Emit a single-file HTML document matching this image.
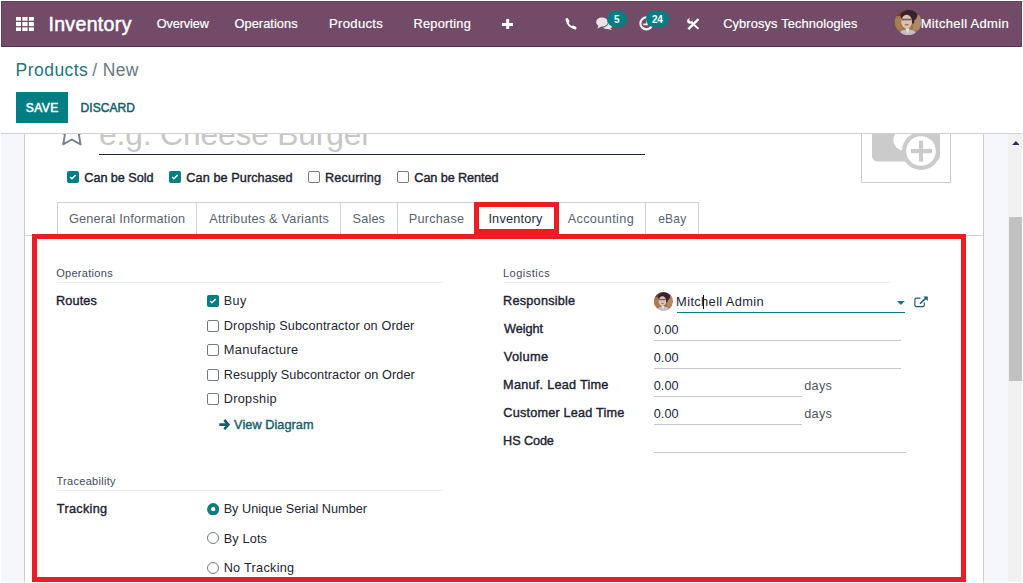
<!DOCTYPE html>
<html>
<head>
<meta charset="utf-8">
<title>Odoo - Products</title>
<style>
*{box-sizing:border-box;margin:0;padding:0}
html,body{width:1023px;height:583px;overflow:hidden;background:#fff;font-family:"Liberation Sans",sans-serif;color:#212529}
.a{position:absolute;white-space:nowrap;line-height:1}
.cb{width:12px;height:12px;border:1px solid #737b88;border-radius:2px;background:#fff}
.rd{width:12px;height:12px;border:1px solid #737b88;border-radius:50%;background:#fff}
.hr{height:1px;background:#eceef1}
.inp{height:1px;background:#c4c7cc}
.ts{top:203px;width:1px;height:32px;background:#cdd1d8}
.badge{background:#017e84;border-radius:8.2px;height:16.4px;top:10.7px}
</style>
</head>
<body>
<!-- NAVBAR -->
<div class="a" style="left:1px;top:1px;width:1021px;height:45px;background:#714b67"></div>
<div class="a" style="left:1px;top:46px;width:1021px;height:1px;background:#552f4d"></div>
<div class="a" style="left:1px;top:1px;width:1px;height:46px;background:#64405b"></div>
<div class="a" style="left:1021px;top:1px;width:1px;height:46px;background:#64405b"></div>
<div class="a" style="left:1px;top:1px;width:1021px;height:1px;background:#64405b"></div>
<!-- apps grid -->
<svg class="a" style="left:15.6px;top:16.9px" width="18" height="14.2" viewBox="0 0 18 14.2"><g fill="#fff"><rect x="0" y="0" width="5" height="3.7"/><rect x="6.3" y="0" width="5.3" height="3.7"/><rect x="12.9" y="0" width="5" height="3.7"/><rect x="0" y="5" width="5" height="4.1"/><rect x="6.3" y="5" width="5.3" height="4.1"/><rect x="12.9" y="5" width="5" height="4.1"/><rect x="0" y="10.4" width="5" height="3.7"/><rect x="6.3" y="10.4" width="5.3" height="3.7"/><rect x="12.9" y="10.4" width="5" height="3.7"/></g></svg>
<!-- plus -->
<svg class="a" style="left:501.8px;top:18.6px" width="11.4" height="10.8" viewBox="0 0 11.4 10.8"><path d="M4.2 0h3v3.9h4.2v3h-4.2v3.9h-3v-3.9h-4.2v-3h4.2z" fill="#fff"/></svg>
<!-- phone -->
<svg class="a" style="left:564.6px;top:18px" width="12" height="11.6" viewBox="0 0 12 11.6"><g fill="none" stroke="#fff" stroke-linecap="round"><path d="M2.1 2.4 C1.9 6 5.6 9.7 9.2 9.5" stroke-width="2"/><path d="M2 1.6 L2.9 3.4" stroke-width="3"/><path d="M8.2 9.1 L10 10" stroke-width="3"/></g></svg>
<!-- comments -->
<svg class="a" style="left:596px;top:16.8px" width="17" height="13.4" viewBox="0 0 17 13.4"><g fill="#ebe4e9"><path d="M11.2 12.1 C13.9 12.1 16.3 10.6 16.3 8.4 C16.3 6.6 14.6 5.2 12.6 4.9 L7 10.4 C8 11.5 9.5 12.1 11.2 12.1Z"/><path d="M13.6 11 L16.3 13.2 L11.8 12Z"/></g><ellipse cx="6" cy="5.1" rx="6.7" ry="5.4" fill="#714b67"/><g fill="#ebe4e9"><ellipse cx="6" cy="5" rx="5.9" ry="4.6"/><path d="M2.6 8 L1.4 11.4 L6 9.3Z"/></g></svg>
<div class="a badge" style="left:607.1px;width:20px"></div>
<!-- clock -->
<svg class="a" style="left:638.6px;top:16.2px" width="15" height="15" viewBox="0 0 15 15"><circle cx="7.4" cy="7.4" r="6" fill="none" stroke="#f4eff3" stroke-width="2.2"/><path d="M4.3 8.4 H8 V3.6" fill="none" stroke="#f4eff3" stroke-width="1.6"/></svg>
<div class="a badge" style="left:646px;width:23px"></div>
<!-- tools -->
<svg class="a" style="left:686.6px;top:17.8px" width="12.6" height="12.2" viewBox="0 0 12.6 12.2"><circle cx="2.9" cy="3" r="2.7" fill="#fff"/><path d="M3.4 3.4 L11.4 10.8" stroke="#fff" stroke-width="1.9" fill="none"/><circle cx="4" cy="1.7" r="1.75" fill="#714b67"/><path d="M11.5 1.1 L1.3 11.1" stroke="#fff" stroke-width="2.4" fill="none"/></svg>
<!-- avatar -->
<svg class="a" style="left:894.7px;top:8.7px" width="26.2" height="26.2" viewBox="0 0 26 26"><defs><clipPath id="av1"><circle cx="13" cy="13" r="13"/></clipPath></defs><g clip-path="url(#av1)"><rect width="26" height="26" fill="#a0744e"/><rect x="0" y="0" width="26" height="7" fill="#6e4338"/><rect x="18" y="6" width="8" height="15" fill="#b08a62"/><rect x="0" y="9" width="7" height="11" fill="#a97c52"/><ellipse cx="13.8" cy="6.8" rx="8.4" ry="5.8" fill="#3a2230"/><rect x="16.4" y="5" width="2.6" height="9.5" rx="1.2" fill="#3a2230"/><ellipse cx="11.6" cy="12.6" rx="5.3" ry="6.8" fill="#dcc4b4"/><rect x="6.8" y="9.6" width="9.6" height="1.7" fill="#6a4a44" opacity=".85"/><ellipse cx="11.6" cy="15.6" rx="2.2" ry="0.9" fill="#b0705f"/><path d="M4 26 C5 21 9 19.5 12.5 21.2 C16 19.5 20.5 21 22 26Z" fill="#c6bcc6"/><path d="M10.4 19 L12.5 24.5 L14.6 19.4Z" fill="#e9e2e6"/></g></svg>

<!-- CONTROL PANEL -->
<div class="a" style="left:16px;top:92px;width:52px;height:31px;background:#017e84"></div>
<div class="a" style="left:1px;top:133px;width:1021px;height:1px;background:#cfd3d9"></div>

<!-- CONTENT BG + SHEET -->
<div class="a" style="left:1px;top:134px;width:1007px;height:448px;background:#f5f7fa"></div>
<div class="a" style="left:24px;top:134px;width:960px;height:448px;background:#fff;border-left:1px solid #c9ccd6;border-right:1px solid #c9ccd6"></div>

<!-- TITLE ROW (clipped) -->
<div class="a" style="left:25px;top:134px;width:958px;height:30px;overflow:hidden">
<div class="a" style="left:74.12px;top:-15.50px;font-size:31.78px;color:#c6c6c6;letter-spacing:-0.161px">e.g. Cheese Burger</div>
<svg class="a" style="left:30px;top:-20px" width="34" height="34" viewBox="55 114 34 34"><path d="M71.7 115.5 L66.8 126.3 L55.8 127.5 L64.9 134.6 L63.2 144.4 L71.7 139.5 L80.6 144.4 L78.9 134.6 L88 127.5 L77 126.3 Z" fill="none" stroke="#7a808e" stroke-width="1.9" stroke-linejoin="round"/></svg>
</div>
<div class="a" style="left:99px;top:154px;width:546px;height:1px;background:#1f2937"></div>
<!-- image placeholder -->
<div class="a" style="left:861px;top:134px;width:90px;height:49px;border:1px solid #c8cdd5;border-top:none;background:#fff;overflow:hidden">
<svg class="a" style="left:-1px;top:0" width="90" height="49" viewBox="861 134 90 49"><rect x="872" y="120" width="68" height="41.5" rx="5.5" fill="#cbcbcb"/><circle cx="904" cy="140" r="10.6" fill="#fff"/><circle cx="921" cy="151" r="19" fill="#cbcbcb"/><circle cx="921" cy="151" r="14.8" fill="#fff"/><rect x="911" y="148.9" width="21" height="4.3" fill="#cbcbcb"/><rect x="918.9" y="140.6" width="4.2" height="21" fill="#cbcbcb"/></svg>
</div>

<!-- option checkboxes -->
<svg class="a" style="left:67px;top:171px" width="12" height="12"><rect width="12" height="12" rx="2" fill="#017e84"/><path d="M3.1 6 L4.9 7.7 L8.7 4" fill="none" stroke="#fff" stroke-width="1.5"/></svg>
<svg class="a" style="left:169px;top:171px" width="12" height="12"><rect width="12" height="12" rx="2" fill="#017e84"/><path d="M3.1 6 L4.9 7.7 L8.7 4" fill="none" stroke="#fff" stroke-width="1.5"/></svg>
<div class="a cb" style="left:308px;top:171px"></div>
<div class="a cb" style="left:397px;top:171px"></div>

<!-- TABS -->
<div class="a" style="left:25px;top:235px;width:958px;height:1px;background:#cdd1d8"></div>
<div class="a" style="left:57px;top:202px;width:642px;height:1px;background:#cdd1d8"></div>
<div class="a" style="left:58px;top:203px;width:640px;height:32px;background:#fff"></div>
<div class="a ts" style="left:57px"></div>
<div class="a ts" style="left:196px"></div>
<div class="a ts" style="left:340px"></div>
<div class="a ts" style="left:397px"></div>
<div class="a ts" style="left:645px"></div>
<div class="a ts" style="left:698px"></div>
<!-- red highlight boxes -->
<div class="a" style="left:474px;top:202px;width:85px;height:32px;border:5px solid #ea1c24;background:#fff"></div>
<div class="a" style="left:32px;top:234px;width:934px;height:348px;border:5px solid #ea1c24;background:#fff"></div>

<!-- group separators -->
<div class="a hr" style="left:57px;top:282px;width:386px"></div>
<div class="a hr" style="left:504px;top:282px;width:386px"></div>
<div class="a hr" style="left:57px;top:490px;width:386px"></div>

<!-- routes checkboxes -->
<svg class="a" style="left:207px;top:295px" width="12" height="12"><rect width="12" height="12" rx="2" fill="#017e84"/><path d="M3.1 6 L4.9 7.7 L8.7 4" fill="none" stroke="#fff" stroke-width="1.5"/></svg>
<div class="a cb" style="left:207px;top:320px"></div>
<div class="a cb" style="left:207px;top:344px"></div>
<div class="a cb" style="left:207px;top:369px"></div>
<div class="a cb" style="left:207px;top:393px"></div>
<!-- arrow -->
<svg class="a" style="left:219px;top:419px" width="11.2" height="11.4" viewBox="0 0 11.2 11.4"><path d="M0.3 4.2 H6.5 L4.3 2 L6.2 0.1 L11.1 5.6 L6.2 11.2 L4.3 9.3 L6.5 7 H0.3 Z" fill="#175e6c"/></svg>

<!-- radios -->
<svg class="a" style="left:206.6px;top:502.6px" width="12.4" height="12.4" viewBox="0 0 12.4 12.4"><circle cx="6.2" cy="6.2" r="6.1" fill="#0c7c83"/><circle cx="6.2" cy="6.2" r="2.1" fill="#fff"/></svg>
<div class="a rd" style="left:207px;top:532px"></div>
<div class="a rd" style="left:207px;top:562px"></div>

<!-- logistics fields -->
<svg class="a" style="left:654.2px;top:291.9px" width="18.8" height="18.8" viewBox="0 0 26 26"><defs><clipPath id="av2"><circle cx="13" cy="13" r="13"/></clipPath></defs><g clip-path="url(#av2)"><rect width="26" height="26" fill="#a0744e"/><rect x="0" y="0" width="26" height="7" fill="#6e4338"/><rect x="18" y="6" width="8" height="15" fill="#b08a62"/><rect x="0" y="9" width="7" height="11" fill="#a97c52"/><ellipse cx="13.8" cy="6.8" rx="8.4" ry="5.8" fill="#3a2230"/><rect x="16.4" y="5" width="2.6" height="9.5" rx="1.2" fill="#3a2230"/><ellipse cx="11.6" cy="12.6" rx="5.3" ry="6.8" fill="#dcc4b4"/><rect x="6.8" y="9.6" width="9.6" height="1.7" fill="#6a4a44" opacity=".85"/><ellipse cx="11.6" cy="15.6" rx="2.2" ry="0.9" fill="#b0705f"/><path d="M4 26 C5 21 9 19.5 12.5 21.2 C16 19.5 20.5 21 22 26Z" fill="#c6bcc6"/><path d="M10.4 19 L12.5 24.5 L14.6 19.4Z" fill="#e9e2e6"/></g></svg>
<div class="a" style="left:677px;top:312px;width:228px;height:1px;background:#017e84"></div>
<div class="a" style="left:703px;top:295px;width:1px;height:13.5px;background:#111"></div>
<svg class="a" style="left:897.1px;top:300.9px" width="7.8" height="3.9" viewBox="0 0 7.8 3.9"><path d="M0 0 H7.8 L3.9 3.9Z" fill="#0d7a80"/></svg>
<svg class="a" style="left:914px;top:296.1px" width="14.2" height="11.8" viewBox="0 0 14.2 11.8"><path d="M6.4 2.1 H2.5 Q0.9 2.1 0.9 3.7 V9.1 Q0.9 10.7 2.5 10.7 H8.7 Q10.3 10.7 10.3 9.1 V6.4" fill="none" stroke="#1a5a6c" stroke-width="1.15"/><path d="M6 7.8 L12.2 1.8" stroke="#1a5a6c" stroke-width="1.6" fill="none"/><path d="M9.2 0.4 H13.8 V5 Z" fill="#0f6670"/></svg>
<div class="a inp" style="left:654px;top:340px;width:247px"></div>
<div class="a inp" style="left:654px;top:368px;width:247px"></div>
<div class="a inp" style="left:654px;top:396px;width:148px"></div>
<div class="a inp" style="left:654px;top:424px;width:148px"></div>
<div class="a inp" style="left:654px;top:452px;width:252px"></div>

<!-- TEXT -->
<div class="a" style="left:48.38px;top:15.00px;font-size:19.52px;color:#ffffff;letter-spacing:0.346px;-webkit-text-stroke:0.5px #ffffff">Inventory</div>
<div class="a" style="left:156.72px;top:18.00px;font-size:12.66px;color:#ffffff;letter-spacing:-0.071px;-webkit-text-stroke:0.2px #ffffff">Overview</div>
<div class="a" style="left:234.46px;top:18.00px;font-size:12.8px;color:#ffffff;letter-spacing:0.061px;-webkit-text-stroke:0.2px #ffffff">Operations</div>
<div class="a" style="left:329.05px;top:17.00px;font-size:13.12px;color:#ffffff;letter-spacing:0.287px;-webkit-text-stroke:0.2px #ffffff">Products</div>
<div class="a" style="left:413.57px;top:18.00px;font-size:12.8px;color:#ffffff;letter-spacing:0.220px;-webkit-text-stroke:0.2px #ffffff">Reporting</div>
<div class="a" style="left:723.18px;top:18.00px;font-size:12.8px;color:#ffffff;letter-spacing:0.145px;-webkit-text-stroke:0.2px #ffffff">Cybrosys Technologies</div>
<div class="a" style="left:920.72px;top:18.00px;font-size:12.95px;color:#ffffff;letter-spacing:0.348px;-webkit-text-stroke:0.2px #ffffff">Mitchell Admin</div>
<div class="a" style="left:614.05px;top:14.90px;font-size:10px;color:#ffffff;font-weight:bold">5</div>
<div class="a" style="left:652.06px;top:14.90px;font-size:10px;color:#ffffff;letter-spacing:-0.317px;font-weight:bold">24</div>
<div class="a" style="left:15.55px;top:62.00px;font-size:17.5px;color:#1f7480;letter-spacing:0.466px">Products</div>
<div class="a" style="left:92.36px;top:62.00px;font-size:17.5px;color:#6b7787;letter-spacing:0.321px">/ New</div>
<div class="a" style="left:25.67px;top:102.00px;font-size:12px;color:#ffffff;letter-spacing:0.470px;-webkit-text-stroke:0.5px #ffffff">SAVE</div>
<div class="a" style="left:80.58px;top:102.00px;font-size:12px;color:#17606b;letter-spacing:0.042px;-webkit-text-stroke:0.5px #17606b">DISCARD</div>
<div class="a" style="left:84.33px;top:171.80px;font-size:12.7px;color:#1f2533;letter-spacing:-0.066px;-webkit-text-stroke:0.4px #1f2533">Can be Sold</div>
<div class="a" style="left:186.33px;top:171.80px;font-size:12.7px;color:#1f2533;letter-spacing:0.069px;-webkit-text-stroke:0.4px #1f2533">Can be Purchased</div>
<div class="a" style="left:325.06px;top:171.80px;font-size:12.7px;color:#1f2533;letter-spacing:0.122px;-webkit-text-stroke:0.4px #1f2533">Recurring</div>
<div class="a" style="left:414.33px;top:171.80px;font-size:12.7px;color:#1f2533;letter-spacing:-0.101px;-webkit-text-stroke:0.4px #1f2533">Can be Rented</div>
<div class="a" style="left:68.98px;top:213.00px;font-size:12.7px;color:#5a6270;letter-spacing:0.215px">General Information</div>
<div class="a" style="left:209.35px;top:213.00px;font-size:12.7px;color:#5a6270;letter-spacing:0.241px">Attributes &amp; Variants</div>
<div class="a" style="left:352.57px;top:213.00px;font-size:12.7px;color:#5a6270;letter-spacing:0.164px">Sales</div>
<div class="a" style="left:408.76px;top:213.00px;font-size:12.7px;color:#5a6270;letter-spacing:0.241px">Purchase</div>
<div class="a" style="left:488.40px;top:213.00px;font-size:12.7px;color:#1f2d3d;letter-spacing:0.207px">Inventory</div>
<div class="a" style="left:567.64px;top:213.00px;font-size:12.7px;color:#5a6270;letter-spacing:0.366px">Accounting</div>
<div class="a" style="left:658.22px;top:213.00px;font-size:11.98px;color:#5a6270;letter-spacing:0.217px">eBay</div>
<div class="a" style="left:56.16px;top:268.00px;font-size:11px;color:#444a5a;letter-spacing:0.302px">Operations</div>
<div class="a" style="left:503.01px;top:268.00px;font-size:11px;color:#444a5a;letter-spacing:0.479px">Logistics</div>
<div class="a" style="left:56.51px;top:476.00px;font-size:11px;color:#444a5a;letter-spacing:0.286px">Traceability</div>
<div class="a" style="left:56.06px;top:295.00px;font-size:12.7px;color:#1f2533;letter-spacing:0.129px;-webkit-text-stroke:0.4px #1f2533">Routes</div>
<div class="a" style="left:56.86px;top:503.00px;font-size:12.7px;color:#1f2533;letter-spacing:0.293px;-webkit-text-stroke:0.4px #1f2533">Tracking</div>
<div class="a" style="left:503.12px;top:295.00px;font-size:12.7px;color:#1f2533;letter-spacing:0.224px;-webkit-text-stroke:0.4px #1f2533">Responsible</div>
<div class="a" style="left:503.95px;top:323.00px;font-size:12.7px;color:#1f2533;letter-spacing:-0.012px;-webkit-text-stroke:0.4px #1f2533">Weight</div>
<div class="a" style="left:503.79px;top:351.00px;font-size:12.89px;color:#1f2533;letter-spacing:0.268px;-webkit-text-stroke:0.4px #1f2533">Volume</div>
<div class="a" style="left:503.12px;top:379.00px;font-size:12.7px;color:#1f2533;letter-spacing:0.245px;-webkit-text-stroke:0.4px #1f2533">Manuf. Lead Time</div>
<div class="a" style="left:503.33px;top:407.00px;font-size:12.7px;color:#1f2533;letter-spacing:0.184px;-webkit-text-stroke:0.4px #1f2533">Customer Lead Time</div>
<div class="a" style="left:503.12px;top:435.00px;font-size:12.7px;color:#1f2533;letter-spacing:-0.118px;-webkit-text-stroke:0.4px #1f2533">HS Code</div>
<div class="a" style="left:223.76px;top:295.00px;font-size:12.56px;color:#1f2533;letter-spacing:0.399px">Buy</div>
<div class="a" style="left:223.76px;top:319.50px;font-size:12.7px;color:#1f2533;letter-spacing:0.123px">Dropship Subcontractor on Order</div>
<div class="a" style="left:223.76px;top:344.00px;font-size:12.85px;color:#1f2533;letter-spacing:0.306px">Manufacture</div>
<div class="a" style="left:223.76px;top:368.50px;font-size:12.7px;color:#1f2533;letter-spacing:0.066px">Resupply Subcontractor on Order</div>
<div class="a" style="left:223.76px;top:393.00px;font-size:12.7px;color:#1f2533;letter-spacing:0.304px">Dropship</div>
<div class="a" style="left:234.12px;top:418.80px;font-size:12.7px;color:#175e6c;letter-spacing:0.064px;-webkit-text-stroke:0.4px #175e6c">View Diagram</div>
<div class="a" style="left:223.65px;top:503.00px;font-size:12.7px;color:#1f2533;letter-spacing:0.010px">By Unique Serial Number</div>
<div class="a" style="left:223.65px;top:532.50px;font-size:12.7px;color:#1f2533;letter-spacing:0.167px">By Lots</div>
<div class="a" style="left:223.65px;top:562.00px;font-size:12.7px;color:#1f2533;letter-spacing:0.278px">No Tracking</div>
<div class="a" style="left:676.09px;top:296.00px;font-size:12.86px;color:#1f2533;letter-spacing:0.364px">Mitchell Admin</div>
<div class="a" style="left:653.66px;top:324.00px;font-size:12.7px;color:#1f2533;letter-spacing:0.099px">0.00</div>
<div class="a" style="left:653.66px;top:352.00px;font-size:12.7px;color:#1f2533;letter-spacing:0.099px">0.00</div>
<div class="a" style="left:653.66px;top:380.00px;font-size:12.7px;color:#1f2533;letter-spacing:0.099px">0.00</div>
<div class="a" style="left:653.66px;top:408.00px;font-size:12.7px;color:#1f2533;letter-spacing:0.099px">0.00</div>
<div class="a" style="left:804.18px;top:379.50px;font-size:12.7px;color:#4f5660;letter-spacing:0.326px">days</div>
<div class="a" style="left:804.18px;top:407.50px;font-size:12.7px;color:#4f5660;letter-spacing:0.326px">days</div>

<!-- SCROLLBAR -->
<div class="a" style="left:1008px;top:134px;width:14px;height:448px;background:#f1f1f1"></div>
<div class="a" style="left:1009px;top:217px;width:13px;height:164px;background:#c1c1c1"></div>
<svg class="a" style="left:1011.7px;top:140.9px" width="7.8" height="4.1" viewBox="0 0 8 4.2"><path d="M0 4.2 L4 0 L8 4.2Z" fill="#2e3148"/></svg>
</body>
</html>
